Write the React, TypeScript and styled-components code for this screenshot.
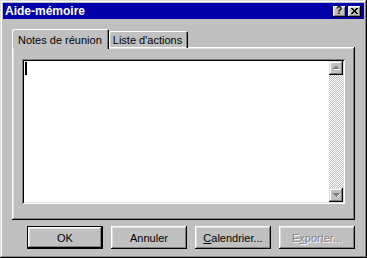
import React from "react";
import styled, { createGlobalStyle } from "styled-components";

const Global = createGlobalStyle`
  html, body { margin: 0; padding: 0; background: #c0c0c0; }
  * { box-sizing: border-box; }
`;

const Window = styled.div`
  width: 367px;
  height: 258px;
  background: #c0c0c0;
  padding: 3px;
  box-shadow: inset -1px -1px #000, inset 1px 1px #dfdfdf, inset -2px -2px #808080, inset 2px 2px #fff;
  display: flex;
  flex-direction: column;
  font-family: "Liberation Sans", Arial, sans-serif;
  font-size: 11px;
  color: #000;
`;

const TitleBar = styled.div`
  height: 16px;
  background: #0000a8;
  display: flex;
  align-items: center;
  padding: 0 3px 0 2px;
`;

const TitleText = styled.div`
  flex: 1;
  color: #fff;
  font-weight: bold;
  font-size: 12px;
  line-height: 16px;
`;

const CapButton = styled.div<{ $gap?: number }>`
  width: 13px;
  height: 11px;
  background: #c0c0c0;
  box-shadow: inset -1px -1px #000, inset 1px 1px #fff, inset -2px -2px #808080, inset 2px 2px #dfdfdf;
  margin-left: ${(p) => p.$gap ?? 0}px;
  display: flex;
  align-items: center;
  justify-content: center;
  font-weight: bold;
  font-size: 10px;
  line-height: 1;
  padding: 0 1px 1px 0;
`;

const Body = styled.div`
  flex: 1;
  display: flex;
  flex-direction: column;
  padding: 9px 9px 0 9px;
`;

const TabStrip = styled.div`
  display: flex;
  align-items: flex-end;
  height: 20px;
  position: relative;
  z-index: 1;
  margin-bottom: -1px;
`;

const Tab = styled.div<{ $active?: boolean }>`
  height: ${(p) => (p.$active ? 20 : 17)}px;
  margin-bottom: ${(p) => (p.$active ? -1 : 0)}px;
  padding: ${(p) => (p.$active ? "2px 7px 0 6px" : "1px 6px 0 4px")};
  background: #c0c0c0;
  border-top-left-radius: 2px;
  border-top-right-radius: 2px;
  box-shadow: ${(p) =>
    p.$active
      ? "inset 1px 1px #fff, inset -1px 0 #000, inset -2px 0 #808080"
      : "inset 1px 1px #fff, inset -1px 0 #000, inset -2px 0 #808080, inset 0 -1px #fff"};
  display: flex;
  align-items: center;
  white-space: nowrap;
`;

const Panel = styled.div`
  height: 173px;
  background: #c0c0c0;
  box-shadow: inset -1px -1px #000, inset 1px 1px #fff, inset -2px -2px #808080, inset 2px 2px #dfdfdf;
  padding: 12px 10px 16px 10px;
  display: flex;
`;

const Field = styled.div`
  flex: 1;
  background: #fff;
  padding: 2px;
  box-shadow: inset 1px 1px #808080, inset -1px -1px #fff, inset 2px 2px #000, inset -2px -2px #dfdfdf;
  display: flex;
`;

const TextArea = styled.div`
  flex: 1;
  padding: 1px 1px;
`;

const Caret = styled.div`
  width: 2px;
  height: 13px;
  background: #000;
`;

const ScrollBar = styled.div`
  width: 14px;
  display: flex;
  flex-direction: column;
  background: repeating-conic-gradient(#c0c0c0 0 25%, #fff 0 50%) 0 0 / 2px 2px;
`;

const Track = styled.div`
  flex: 1;
`;

const ArrowButton = styled.div`
  width: 14px;
  height: 14px;
  background: #c0c0c0;
  box-shadow: inset -1px -1px #000, inset 1px 1px #dfdfdf, inset -2px -2px #808080, inset 2px 2px #fff;
  display: flex;
  align-items: center;
  justify-content: center;
`;

const ButtonRow = styled.div`
  display: flex;
  justify-content: flex-end;
  gap: 8px;
  margin-top: 6px;
`;

const Button = styled.div<{ $default?: boolean; $disabled?: boolean }>`
  width: 76px;
  height: 23px;
  background: #c0c0c0;
  display: flex;
  align-items: center;
  justify-content: center;
  box-shadow: ${(p) =>
    p.$default
      ? "inset -1px -1px #000, inset 1px 1px #000, inset -2px -2px #000, inset 2px 2px #fff, inset -3px -3px #808080, inset 3px 3px #dfdfdf"
      : "inset -1px -1px #000, inset 1px 1px #fff, inset -2px -2px #808080, inset 2px 2px #dfdfdf"};
  color: ${(p) => (p.$disabled ? "#808080" : "#000")};
  text-shadow: ${(p) => (p.$disabled ? "1px 1px #fff" : "none")};
  padding-top: 1px;
`;

const U = styled.span`
  text-decoration: underline;
`;

const Arrow = ({ up }: { up?: boolean }) => (
  <svg width="7" height="4" viewBox="0 0 7 4" style={{ overflow: "visible" }}>
    <path
      d={up ? "M4 1h1v1h1v1h1v1H1V3h1V2h1V1z" : "M1 1h6v1H6v1H5v1H3V3H2V2H1z"}
      fill="#fff"
    />
    <path
      d={up ? "M3 0h1v1h1v1h1v1H0V2h1V1h1V0z" : "M0 0h7v1H6v1H5v1H4v1H3V3H2V2H1V1H0z"}
      fill="#808080"
    />
  </svg>
);

const CloseGlyph = () => (
  <svg width="7" height="6" viewBox="0 0 7 6">
    <path
      d="M0 0h2v1h1v1h1V1h1V0h2v1H6v1H5v2h1v1h1v1H5V5H4V4H3v1H2v1H0V5h1V4h1V2H1V1H0z"
      fill="#000"
    />
  </svg>
);

export default function App() {
  return (
    <>
      <Global />
      <Window>
        <TitleBar>
          <TitleText>Aide-mémoire</TitleText>
          <CapButton>?</CapButton>
          <CapButton $gap={2}>
            <CloseGlyph />
          </CapButton>
        </TitleBar>
        <Body>
          <TabStrip>
            <Tab $active>Notes de réunion</Tab>
            <Tab>Liste d'actions</Tab>
          </TabStrip>
          <Panel>
            <Field>
              <TextArea>
                <Caret />
              </TextArea>
              <ScrollBar>
                <ArrowButton>
                  <Arrow up />
                </ArrowButton>
                <Track />
                <ArrowButton>
                  <Arrow />
                </ArrowButton>
              </ScrollBar>
            </Field>
          </Panel>
          <ButtonRow>
            <Button $default>OK</Button>
            <Button>Annuler</Button>
            <Button>
              <span>
                <U>C</U>alendrier...
              </span>
            </Button>
            <Button $disabled>
              <span>
                E<U>x</U>porter...
              </span>
            </Button>
          </ButtonRow>
        </Body>
      </Window>
    </>
  );
}
